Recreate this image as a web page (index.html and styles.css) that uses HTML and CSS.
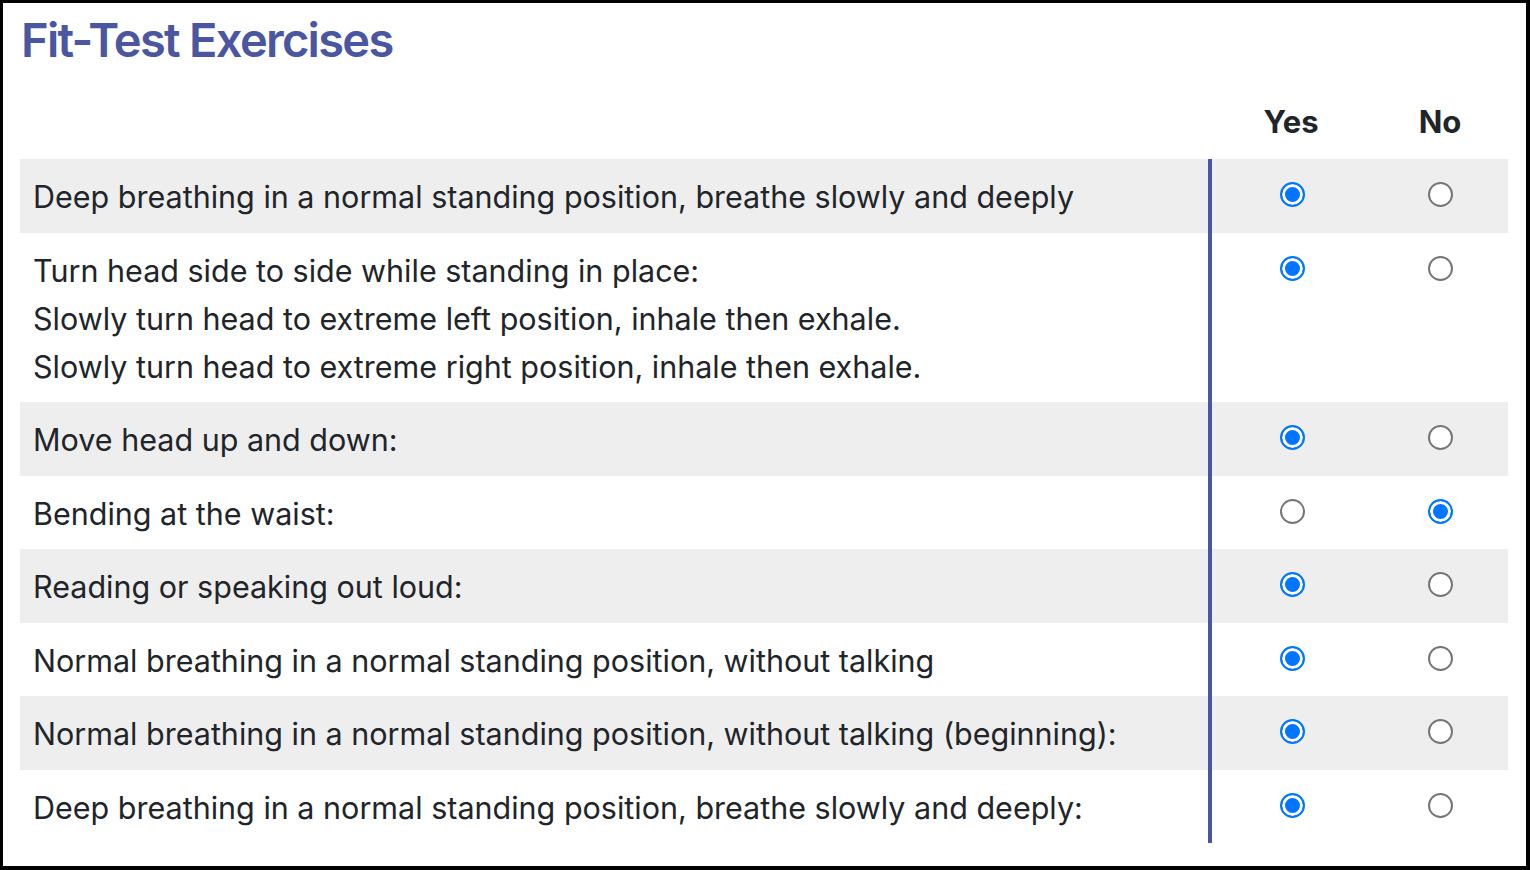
FILE: index.html
```html
<!DOCTYPE html>
<html lang="en">
<head>
<meta charset="utf-8">
<title>Fit-Test Exercises</title>
<link rel="stylesheet" href="styles.css">
</head>
<body>
<div class="frame">
  <h1 class="title">Fit-Test Exercises</h1>
  <table class="ex-table">
    <colgroup>
      <col class="col-label">
      <col class="col-yes">
      <col class="col-no">
    </colgroup>
    <thead>
      <tr>
        <th class="label-head"></th>
        <th class="opt-head">Yes</th>
        <th class="opt-head">No</th>
      </tr>
    </thead>
    <tbody>
      <tr class="row-alt">
        <td class="label">Deep breathing in a normal standing position, breathe slowly and deeply</td>
        <td class="opt"><input type="radio" class="radio" name="r1" checked></td>
        <td class="opt"><input type="radio" class="radio" name="r1"></td>
      </tr>
      <tr>
        <td class="label">Turn head side to side while standing in place:<br>Slowly turn head to extreme left position, inhale then exhale.<br>Slowly turn head to extreme right position, inhale then exhale.</td>
        <td class="opt"><input type="radio" class="radio" name="r2" checked></td>
        <td class="opt"><input type="radio" class="radio" name="r2"></td>
      </tr>
      <tr class="row-alt">
        <td class="label">Move head up and down:</td>
        <td class="opt"><input type="radio" class="radio" name="r3" checked></td>
        <td class="opt"><input type="radio" class="radio" name="r3"></td>
      </tr>
      <tr>
        <td class="label">Bending at the waist:</td>
        <td class="opt"><input type="radio" class="radio" name="r4"></td>
        <td class="opt"><input type="radio" class="radio" name="r4" checked></td>
      </tr>
      <tr class="row-alt">
        <td class="label">Reading or speaking out loud:</td>
        <td class="opt"><input type="radio" class="radio" name="r5" checked></td>
        <td class="opt"><input type="radio" class="radio" name="r5"></td>
      </tr>
      <tr>
        <td class="label">Normal breathing in a normal standing position, without talking</td>
        <td class="opt"><input type="radio" class="radio" name="r6" checked></td>
        <td class="opt"><input type="radio" class="radio" name="r6"></td>
      </tr>
      <tr class="row-alt">
        <td class="label">Normal breathing in a normal standing position, without talking (beginning):</td>
        <td class="opt"><input type="radio" class="radio" name="r7" checked></td>
        <td class="opt"><input type="radio" class="radio" name="r7"></td>
      </tr>
      <tr>
        <td class="label">Deep breathing in a normal standing position, breathe slowly and deeply:</td>
        <td class="opt"><input type="radio" class="radio" name="r8" checked></td>
        <td class="opt"><input type="radio" class="radio" name="r8"></td>
      </tr>
    </tbody>
  </table>
</div>
</body>
</html>
```

FILE: styles.css
```css
html, body {
  margin: 0;
  padding: 0;
  background: #000;
}

body {
  font-family: Inter, "Noto Sans", sans-serif;
  color: #212529;
}

.frame {
  box-sizing: border-box;
  width: 1530px;
  height: 870px;
  background: #fff;
  border-style: solid;
  border-color: #000;
  border-width: 3px 4px 4px 3px;
  padding: 8px 18px 0 17px;
}

.title {
  margin: 0 0 0 1px;
  font-size: 47px;
  font-weight: 600;
  line-height: 58px;
  color: #4b56a0;
  letter-spacing: -1.7px;
}

.ex-table {
  margin-top: 16px;
  width: 1488px;
  border-collapse: collapse;
  table-layout: fixed;
  font-size: 30.5px;
  line-height: 48px;
}

.col-label { width: 1190px; }
.col-yes { width: 162px; }
.col-no { width: 136px; }

.opt-head {
  padding: 13px 0;
  font-weight: 700;
  text-align: center;
  font-size: 31px;
}

.label-head {
  padding: 13px 0;
}

.label {
  padding: 14px 13px 11.5px;
  vertical-align: top;
  border-right: 4px solid #4b56a0;
}

.opt {
  padding: 14px 0 11.5px;
  text-align: center;
  vertical-align: top;
}

.row-alt td {
  background: #eeeeee;
}

.radio {
  -webkit-appearance: none;
  appearance: none;
  box-sizing: border-box;
  width: 25px;
  height: 25px;
  margin: 9px 0 0 0;
  border: 2px solid #767676;
  border-radius: 50%;
  background: #fff;
  vertical-align: top;
}

.radio:checked {
  border-color: #0075ff;
  background: #0075ff;
  box-shadow: inset 0 0 0 3px #fff;
}
```
